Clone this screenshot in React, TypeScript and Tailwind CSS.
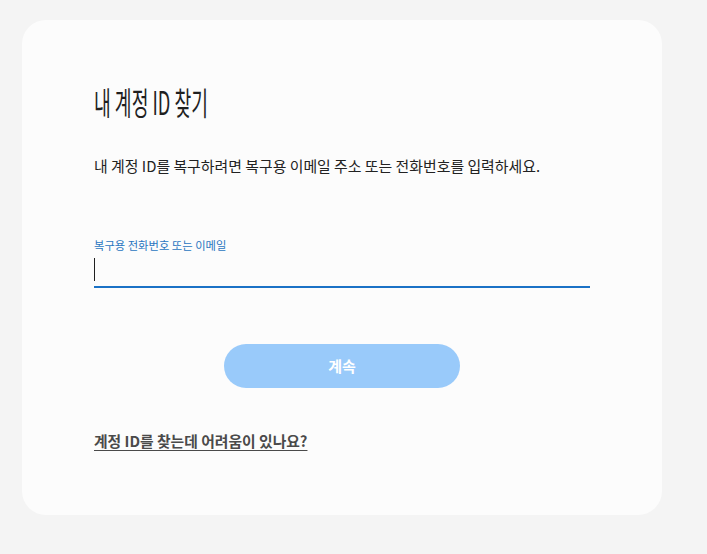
import React from "react";

export default function App() {
  const ko = { fontFamily: '"Noto Sans CJK KR", "Noto Sans", sans-serif' };
  return (
    <div className="min-h-[554px] w-[707px] bg-[#f4f4f4] pt-[20px] pl-[22px]" style={ko}>
      <div className="flex w-[640px] flex-col rounded-[24px] bg-[#fcfcfc] px-[72px] pt-[61px] pb-[64px]">
        <h1 className="h-[40px] whitespace-nowrap text-[32px] leading-[40px] font-normal text-[#1f1f1f]">
          <span className="inline-block origin-left scale-x-[0.57]">내 계정 ID 찾기</span>
        </h1>
        <p className="mt-[35px] h-[20px] whitespace-nowrap text-[14.9px] leading-[20px] text-[#222]">
          내 계정 ID를 복구하려면 복구용 이메일 주소 또는 전화번호를 입력하세요.
        </p>
        <label className="mt-[61px] h-[16px] whitespace-nowrap text-[11.3px] leading-[16px] text-[#2a76c0]">
          복구용 전화번호 또는 이메일
        </label>
        <div className="flex h-[35px] items-start border-b-2 border-[#1b72c6] pt-[5px]">
          <span className="h-[23px] w-px bg-[#1f1f1f]" />
        </div>
        <div className="mt-[56px] flex justify-center">
          <button className="h-[44px] w-[236px] rounded-full bg-[#99cafa] text-[15px] font-bold text-white">
            계속
          </button>
        </div>
        <a className="mt-[43px] h-[20px] self-start whitespace-nowrap text-[14.8px] leading-[20px] font-semibold text-[#4a4a4a] underline underline-offset-[3px]">
          계정 ID를 찾는데 어려움이 있나요?
        </a>
      </div>
    </div>
  );
}
